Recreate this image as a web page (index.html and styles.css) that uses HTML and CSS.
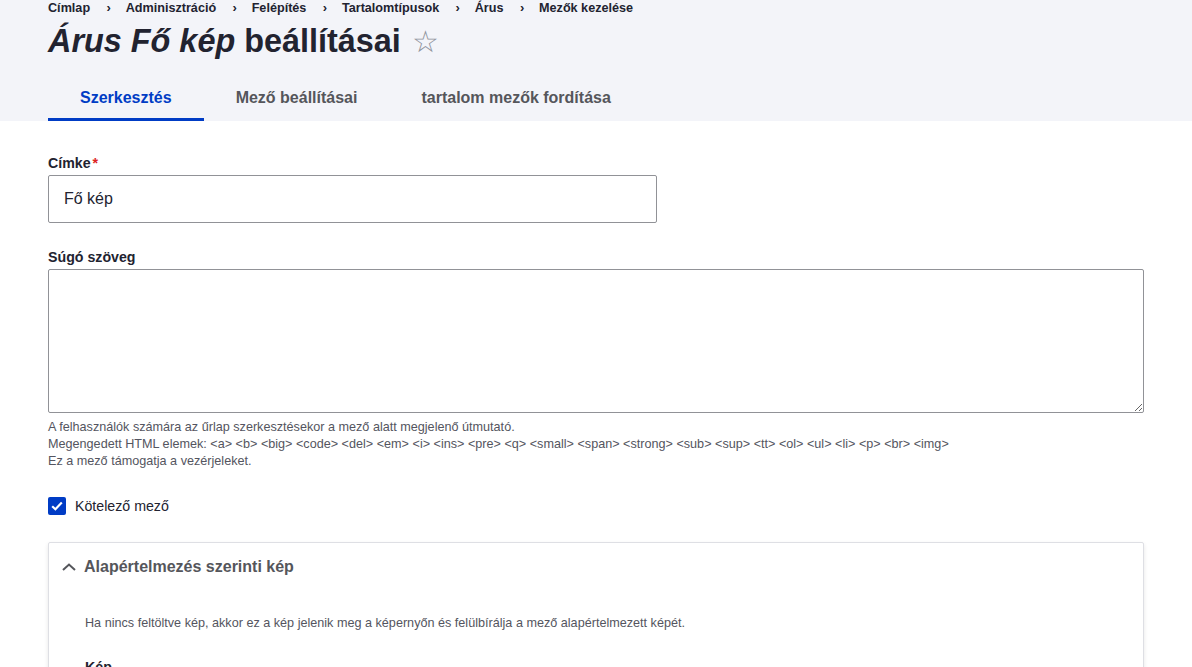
FILE: index.html
```html
<!DOCTYPE html>
<html lang="hu">
<head>
<meta charset="utf-8">
<title>Árus Fő kép beállításai</title>
<link rel="stylesheet" href="styles.css">
</head>
<body>
<header class="page-header">
  <nav class="breadcrumb">
    <a href="#">Címlap</a><span class="sep">›</span>
    <a href="#">Adminisztráció</a><span class="sep">›</span>
    <a href="#">Felépítés</a><span class="sep">›</span>
    <a href="#">Tartalomtípusok</a><span class="sep">›</span>
    <a href="#">Árus</a><span class="sep">›</span>
    <a href="#">Mezők kezelése</a>
  </nav>
  <h1 class="title"><em>Árus Fő kép</em> beállításai <span class="star">☆</span></h1>
  <ul class="tabs">
    <li class="tab active">Szerkesztés</li>
    <li class="tab">Mező beállításai</li>
    <li class="tab">tartalom mezők fordítása</li>
  </ul>
</header>
<main class="content">
  <div class="field">
    <label class="label">Címke<span class="req">*</span></label>
    <input class="text-input" type="text" value="Fő kép">
  </div>
  <div class="field">
    <label class="label">Súgó szöveg</label>
    <textarea class="textarea"></textarea>
    <div class="desc">
      <div>A felhasználók számára az űrlap szerkesztésekor a mező alatt megjelenő útmutató.</div>
      <div>Megengedett HTML elemek: &lt;a&gt; &lt;b&gt; &lt;big&gt; &lt;code&gt; &lt;del&gt; &lt;em&gt; &lt;i&gt; &lt;ins&gt; &lt;pre&gt; &lt;q&gt; &lt;small&gt; &lt;span&gt; &lt;strong&gt; &lt;sub&gt; &lt;sup&gt; &lt;tt&gt; &lt;ol&gt; &lt;ul&gt; &lt;li&gt; &lt;p&gt; &lt;br&gt; &lt;img&gt;</div>
      <div>Ez a mező támogatja a vezérjeleket.</div>
    </div>
  </div>
  <div class="check-row">
    <span class="checkbox"><svg width="12" height="10" viewBox="0 0 12 10"><path d="M1.2 5.2 L4.4 8.2 L10.8 1.6" fill="none" stroke="#fff" stroke-width="2.2"/></svg></span>
    <span class="check-label">Kötelező mező</span>
  </div>
  <section class="details">
    <div class="summary">
      <svg class="chev" width="16" height="16" viewBox="0 0 16 16"><path d="M2 11 L8 5.5 L14 11" fill="none" stroke="#55565b" stroke-width="2"/></svg>
      <span>Alapértelmezés szerinti kép</span>
    </div>
    <div class="details-body">
      <p class="desc">Ha nincs feltöltve kép, akkor ez a kép jelenik meg a képernyőn és felülbírálja a mező alapértelmezett képét.</p>
      <div class="label">Kép</div>
    </div>
  </section>
</main>
</body>
</html>
```
FILE: styles.css
```css
* { box-sizing: border-box; }
html, body { margin: 0; padding: 0; }
body {
  font-family: "Liberation Sans", Arial, sans-serif;
  color: #222330;
  background: #fff;
}
.page-header {
  background: #f3f4f9;
  padding: 0 48px;
  margin-top: -5px;
}
.breadcrumb {
  display: flex;
  align-items: center;
  font-size: 12.64px;
  font-weight: 700;
  line-height: 26px;
}
.breadcrumb a { color: #222330; text-decoration: none; }
.breadcrumb .sep {
  margin: 0 14.8px 0 16.4px;
  font-size: 13px;
  color: #222330;
}
.title {
  margin: 0;
  font-size: 32.4px;
  line-height: 40px;
  font-weight: 700;
}
.title em { font-style: italic; }
.star {
  font-weight: 400;
  color: #8e929c;
  font-size: 30px;
  margin-left: 2px;
}
.tabs {
  list-style: none;
  margin: 0;
  padding: 0;
  display: flex;
  margin-top: 16px;
}
.tab {
  padding: 0 32px;
  height: 43px;
  line-height: 40px;
  font-size: 16px;
  font-weight: 700;
  color: #55565b;
  border-bottom: 3px solid transparent;
}
.tab.active {
  color: #003cc5;
  border-bottom-color: #003cc5;
}
.content {
  padding: 33px 48px 0;
}
.field { margin-bottom: 25px; }
.label {
  display: block;
  font-size: 14.2px;
  font-weight: 700;
  line-height: 18px;
  margin-bottom: 3px;
  color: #222330;
}
.req { color: #dc2323; margin-left: 2px; }
.text-input {
  display: block;
  width: 609px;
  height: 48px;
  border: 1px solid #919297;
  border-radius: 2px;
  padding: 0 15px;
  font-family: "Liberation Sans", Arial, sans-serif;
  font-size: 16px;
  color: #222330;
  background: #fff;
}
.textarea {
  display: block;
  width: 100%;
  height: 144px;
  border: 1px solid #919297;
  border-radius: 2px;
  background: #fff;
  resize: vertical;
  margin: 0;
}
.desc {
  font-size: 12.64px;
  line-height: 17px;
  color: #545560;
  margin-top: 6px;
}
.check-row {
  display: flex;
  align-items: center;
  gap: 9px;
  margin-top: 27px;
  height: 18px;
}
.checkbox {
  width: 18px;
  height: 18px;
  background: #003cc5;
  border-radius: 2px;
  display: flex;
  align-items: center;
  justify-content: center;
}
.check-label { font-size: 14.2px; color: #222330; }
.details {
  margin-top: 27px;
  border: 1px solid #dedfe4;
  border-radius: 2px;
  box-shadow: 0 2px 4px rgba(0,0,0,0.1);
}
.summary {
  display: flex;
  align-items: center;
  gap: 7px;
  padding: 0 12px;
  height: 48px;
  font-size: 16px;
  font-weight: 700;
  color: #55565b;
}
.chev { flex: none; }
.details-body {
  padding: 16px 36px 0;
}
.details-body .desc { margin: 8px 0 26px; }
```
